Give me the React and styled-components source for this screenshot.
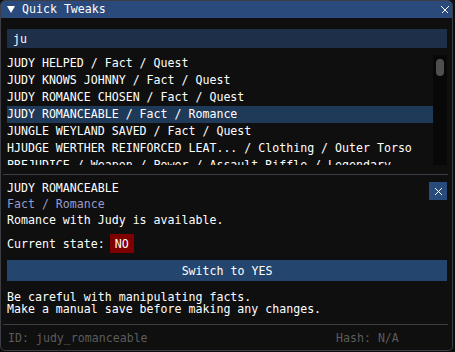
import React from "react";
import styled, { createGlobalStyle } from "styled-components";

const GlobalStyle = createGlobalStyle`
  html, body { margin: 0; padding: 0; background: #0d0d0d; }
  body { font-family: "DejaVu Sans Mono", "Liberation Mono", monospace; font-size: 11.6px; color: #ffffff; }
  * { box-sizing: border-box; }
`;

const Window = styled.div`
  width: 453px;
  height: 351px;
  border: 1px solid #3d3d45;
  border-radius: 5px;
  overflow: hidden;
  background: #0f0f0f;
  display: flex;
  flex-direction: column;
`;

const TitleBar = styled.div`
  height: 17px;
  flex-shrink: 0;
  background: #294a7a;
  display: flex;
  align-items: center;
  padding: 0 3px 0 6px;
  line-height: 13px;
`;

const TitleText = styled.span`
  margin-left: 7px;
  flex: 1;
  white-space: pre;
`;

const Body = styled.div`
  display: flex;
  flex-direction: column;
  padding: 0 5px 0 6px;
  flex: 1;
`;

const Input = styled.div`
  margin-top: 11px;
  height: 19px;
  background: #1d2f49;
  display: flex;
  align-items: center;
  padding-left: 6px;
`;

const ListArea = styled.div`
  margin-top: 7px;
  height: 110px;
  display: flex;
  overflow: hidden;
`;

const Rows = styled.div`
  flex: 1;
  display: flex;
  flex-direction: column;
  overflow: hidden;
`;

const Row = styled.div`
  height: 17px;
  flex-shrink: 0;
  line-height: 17px;
  white-space: pre;
  overflow: hidden;
  background: ${(p) => (p.$selected ? "#1f3958" : "transparent")};
`;

const Scrollbar = styled.div`
  width: 14px;
  flex-shrink: 0;
  background: #080808;
  padding: 4px 3px;
`;

const Grab = styled.div`
  height: 17px;
  border-radius: 4px;
  background: #4f4f4f;
`;

const Separator = styled.div`
  height: 1px;
  flex-shrink: 0;
  background: #3d3d45;
  margin: ${(p) => p.$top}px -1px 0 -4px;
`;

const Detail = styled.div`
  margin-top: 7px;
  display: grid;
  grid-template-columns: 1fr auto;
  align-items: start;
`;

const Lines = styled.div`
  display: flex;
  flex-direction: column;
  gap: 3px;
  line-height: 13px;
`;

const Category = styled.div`
  color: #9b9bcb;
`;

const SmallButton = styled.div`
  width: 18px;
  height: 18px;
  background: #294b7b;
  display: flex;
  align-items: center;
  justify-content: center;
  margin-right: 0;
`;

const StateRow = styled.div`
  margin-top: 7px;
  height: 19px;
  display: flex;
  align-items: center;
  white-space: pre;
`;

const Badge = styled.span`
  margin-left: 5px;
  height: 19px;
  padding: 0 5px;
  background: #7f0000;
  display: flex;
  align-items: center;
`;

const WideButton = styled.div`
  margin-top: 7px;
  height: 21px;
  background: #24456d;
  display: flex;
  align-items: center;
  justify-content: center;
`;

const Warning = styled.div`
  margin-top: 10px;
  line-height: 12px;
  white-space: pre;
`;

const Footer = styled.div`
  margin-top: 7px;
  line-height: 13px;
  display: grid;
  grid-template-columns: 328px 1fr;
  color: #5c5c5c;
  white-space: pre;
  padding-left: 1px;
`;

const Cross = ({ size = 8 }) => (
  <svg width={size} height={size} viewBox="0 0 8 8" shapeRendering="crispEdges">
    <path d="M0.5 0.5 L7.5 7.5 M7.5 0.5 L0.5 7.5" stroke="#ffffff" strokeWidth="1.2" fill="none" />
  </svg>
);

const Triangle = () => (
  <svg width="8" height="7" viewBox="0 0 8 7">
    <path d="M0 0 H8 L4 7 Z" fill="#ffffff" />
  </svg>
);

const rows = [
  "JUDY HELPED / Fact / Quest",
  "JUDY KNOWS JOHNNY / Fact / Quest",
  "JUDY ROMANCE CHOSEN / Fact / Quest",
  "JUDY ROMANCEABLE / Fact / Romance",
  "JUNGLE WEYLAND SAVED / Fact / Quest",
  "HJUDGE WERTHER REINFORCED LEAT... / Clothing / Outer Torso",
  "PREJUDICE / Weapon / Power / Assault Riffle / Legendary",
];

export default function App() {
  return (
    <>
      <GlobalStyle />
      <Window>
        <TitleBar>
          <Triangle />
          <TitleText>Quick Tweaks</TitleText>
          <Cross size={8} />
        </TitleBar>
        <Body>
          <Input>ju</Input>
          <ListArea>
            <Rows>
              {rows.map((r, i) => (
                <Row key={r} $selected={i === 3}>{r}</Row>
              ))}
            </Rows>
            <Scrollbar>
              <Grab />
            </Scrollbar>
          </ListArea>
          <Separator $top={9} />
          <Detail>
            <Lines>
              <div>JUDY ROMANCEABLE</div>
              <Category>Fact / Romance</Category>
              <div>Romance with Judy is available.</div>
            </Lines>
            <SmallButton>
              <Cross size={7} />
            </SmallButton>
          </Detail>
          <StateRow>
            Current state:
            <Badge>NO</Badge>
          </StateRow>
          <WideButton>Switch to YES</WideButton>
          <Warning>
            {"Be careful with manipulating facts.\nMake a manual save before making any changes."}
          </Warning>
          <Separator $top={9} />
          <Footer>
            <span>ID: judy_romanceable</span>
            <span>Hash: N/A</span>
          </Footer>
        </Body>
      </Window>
    </>
  );
}
